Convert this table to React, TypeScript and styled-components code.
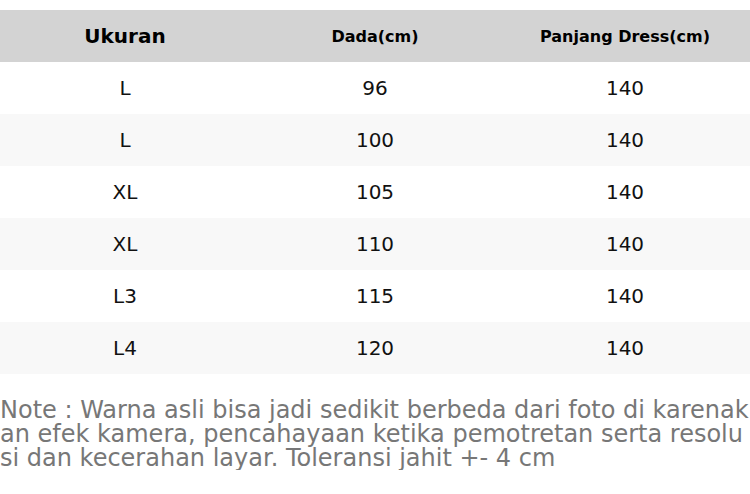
import React from 'react';
import styled, { createGlobalStyle } from 'styled-components';

const GlobalStyle = createGlobalStyle`
    html, body {
        margin: 0;
        padding: 0;
        background: #ffffff;
        font-family: "DejaVu Sans", Verdana, sans-serif;
    }
`;

const rows = [
    ['L', '96', '140'],
    ['L', '100', '140'],
    ['XL', '105', '140'],
    ['XL', '110', '140'],
    ['L3', '115', '140'],
    ['L4', '120', '140'],
];

function App() {
    return (
        <>
            <GlobalStyle />
            <Page>
                <SizeTable>
                    <thead>
                        <tr>
                            <HeadCell $big>Ukuran</HeadCell>
                            <HeadCell>Dada(cm)</HeadCell>
                            <HeadCell>Panjang Dress(cm)</HeadCell>
                        </tr>
                    </thead>
                    <tbody>
                        {rows.map((row, index) => (
                            <Row key={index} $striped={index % 2 === 1}>
                                {row.map((value, i) => (
                                    <Cell key={i}>{value}</Cell>
                                ))}
                            </Row>
                        ))}
                    </tbody>
                </SizeTable>
                <Note>
                    Note : Warna asli bisa jadi sedikit berbeda dari foto di karenakan efek kamera, pencahayaan ketika pemotretan serta resolusi dan kecerahan layar. Toleransi jahit +- 4 cm
                </Note>
            </Page>
        </>
    );
}

export default App;

const Page = styled.div`
    width: 750px;
    padding-top: 10px;
`;

const SizeTable = styled.table`
    width: 100%;
    border-collapse: collapse;
    table-layout: fixed;
`;

const HeadCell = styled.th<{ $big?: boolean }>`
    height: 52px;
    padding: 0;
    background: #d3d3d3;
    color: #000;
    font-weight: bold;
    font-size: ${(p) => (p.$big ? '20px' : '16px')};
    text-align: center;
    vertical-align: middle;
`;

const Row = styled.tr<{ $striped?: boolean }>`
    background: ${(p) => (p.$striped ? '#f8f8f8' : '#ffffff')};
`;

const Cell = styled.td`
    height: 52px;
    padding: 0;
    font-size: 20px;
    color: #111;
    text-align: center;
    vertical-align: middle;
`;

const Note = styled.p`
    margin: 24px 0 0;
    font-size: 24px;
    line-height: 24px;
    color: #777777;
    word-break: break-all;
`;
